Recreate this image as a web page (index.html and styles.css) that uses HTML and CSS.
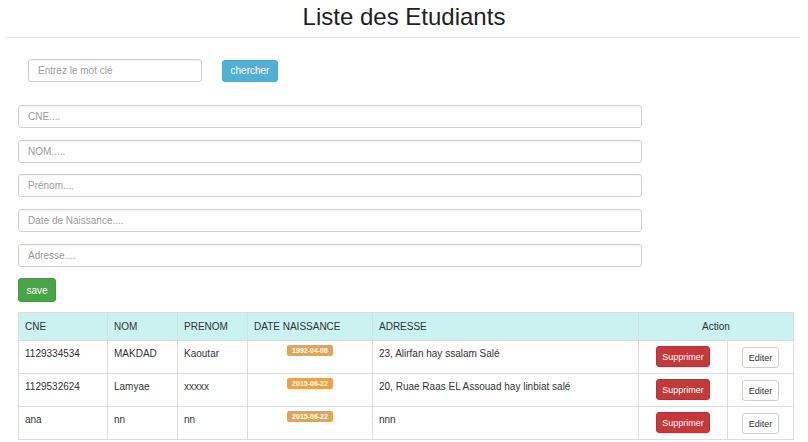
FILE: index.html
```html
<!DOCTYPE html>
<html lang="fr">
<head>
<meta charset="utf-8">
<title>Liste des Etudiants</title>
<link rel="stylesheet" href="styles.css">
</head>
<body>
<h1 class="title">Liste des Etudiants</h1>
<hr class="sep">
<div class="search">
  <input class="field search-field" type="text" placeholder="Entrez le mot clé">
  <button class="btn btn-info">chercher</button>
</div>
<form class="form">
  <input class="field" type="text" placeholder="CNE....">
  <input class="field" type="text" placeholder="NOM.....">
  <input class="field" type="text" placeholder="Prénom....">
  <input class="field" type="text" placeholder="Date de Naissance....">
  <input class="field" type="text" placeholder="Adresse....">
  <div><button type="button" class="btn btn-success">save</button></div>
</form>
<table class="grid">
  <colgroup>
    <col class="c1"><col class="c2"><col class="c3"><col class="c4"><col class="c5"><col class="c6"><col class="c7">
  </colgroup>
  <thead>
    <tr>
      <th>CNE</th><th>NOM</th><th>PRENOM</th><th>DATE NAISSANCE</th><th>ADRESSE</th><th colspan="2" class="center">Action</th>
    </tr>
  </thead>
  <tbody>
    <tr>
      <td>1129334534</td><td>MAKDAD</td><td>Kaoutar</td>
      <td class="center"><span class="badge">1992-04-08</span></td>
      <td>23, Alirfan hay ssalam Salé</td>
      <td class="center"><button class="btn btn-danger">Supprimer</button></td>
      <td class="center"><button class="btn btn-default">Editer</button></td>
    </tr>
    <tr>
      <td>1129532624</td><td>Lamyae</td><td>xxxxx</td>
      <td class="center"><span class="badge">2015-06-22</span></td>
      <td>20, Ruae Raas EL Assouad hay linbiat salé</td>
      <td class="center"><button class="btn btn-danger">Supprimer</button></td>
      <td class="center"><button class="btn btn-default">Editer</button></td>
    </tr>
    <tr>
      <td>ana</td><td>nn</td><td>nn</td>
      <td class="center"><span class="badge">2015-06-22</span></td>
      <td>nnn</td>
      <td class="center"><button class="btn btn-danger">Supprimer</button></td>
      <td class="center"><button class="btn btn-default">Editer</button></td>
    </tr>
  </tbody>
</table>
</body>
</html>
```
FILE: styles.css
```css
* { box-sizing: border-box; }
html, body { margin: 0; padding: 0; background: #fff; }
body {
  font-family: "Liberation Sans", Arial, sans-serif;
  color: #333;
  font-size: 10px;
  padding-top: 3px;
}
.title {
  margin: 0;
  font-size: 24px;
  line-height: 28px;
  font-weight: normal;
  text-align: center;
  color: #1e1e1e;
}
.sep {
  margin: 6px 8px 0 5px;
  border: 0;
  border-top: 1px solid #eaeaea;
  height: 0;
}
.search {
  display: flex;
  align-items: center;
  gap: 20px;
  margin: 21px 0 0 28px;
}
.field {
  display: block;
  height: 23px;
  padding: 0 9px;
  border: 1px solid #cfcfcf;
  border-radius: 3px;
  box-shadow: inset 0 1px 1px rgba(0,0,0,0.05);
  font-family: "Liberation Sans", Arial, sans-serif;
  font-size: 10px;
  color: #555;
  background: #fff;
  outline: none;
}
.field::placeholder { color: #9a9a9a; }
.search-field { width: 174px; }
.form {
  margin: 23px 0 0 18px;
  width: 624px;
  display: flex;
  flex-direction: column;
  gap: 11.7px;
}
.form .field { width: 100%; }
.btn {
  font-family: "Liberation Sans", Arial, sans-serif;
  font-size: 10px;
  border-radius: 3px;
  border: 1px solid transparent;
  padding: 0;
  cursor: pointer;
  vertical-align: top;
}
.btn-info {
  width: 56px;
  height: 22px;
  background: #4fb2d4;
  border-color: #46aacd;
  color: #fff;
}
.btn-success {
  width: 38px;
  height: 24px;
  background: #47a447;
  border-color: #419a41;
  color: #fff;
}
.btn-danger {
  width: 54px;
  height: 21px;
  background: #c4393a;
  border-color: #b73333;
  color: #fff;
  font-size: 9px;
}
.btn-default {
  width: 37px;
  height: 21px;
  margin-top: 1px;
  background: #fff;
  border-color: #ccc;
  color: #333;
  font-size: 9px;
}
.grid {
  margin: 10px 0 0 18px;
  width: 775px;
  border-collapse: collapse;
  table-layout: fixed;
  border: 1px solid #dcdcdc;
}
.c1 { width: 89px; }
.c2 { width: 70px; }
.c3 { width: 70px; }
.c4 { width: 125px; }
.c5 { width: 266px; }
.c6 { width: 89px; }
.c7 { width: 66px; }
.grid th {
  background: #c9f2f0;
  font-weight: normal;
  text-align: left;
  height: 28px;
  padding: 0 6px;
  border: 1px solid #dcdcdc;
  color: #333;
}
.grid td {
  height: 33px;
  padding: 5px 6px 0;
  border: 1px solid #dcdcdc;
  border-top-color: #e2e2e2;
  vertical-align: top;
  line-height: 15px;
  color: #333;
  white-space: nowrap;
}
.grid th.center, .grid td.center { text-align: center; }
.badge {
  display: inline-block;
  vertical-align: top;
  margin-top: -1px;
  background: #e9a34c;
  color: #fff;
  font-weight: bold;
  font-size: 7px;
  line-height: 11px;
  height: 11px;
  padding: 0 5px;
  border-radius: 2px;
}
```
